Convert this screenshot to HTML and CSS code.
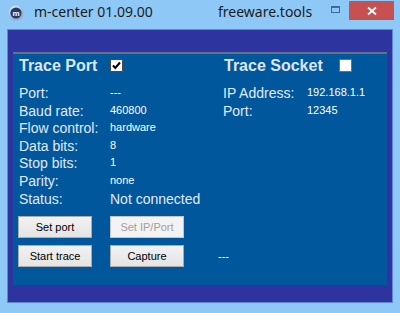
FILE: index.html
```html
<!DOCTYPE html>
<html lang="en">
<head>
    <meta charset="UTF-8">
    <title>m-center 01.09.00</title>
    <link rel="stylesheet" href="styles.css">
</head>
<body>
    <div class="titlebar">
        <svg class="app-icon" width="16" height="16" viewBox="0 0 16 16">
            <defs>
                <radialGradient id="ring" cx="40%" cy="30%" r="75%">
                    <stop offset="0" stop-color="#f4f6fa"/>
                    <stop offset="1" stop-color="#8d9bb2"/>
                </radialGradient>
            </defs>
            <circle cx="8" cy="8" r="7.6" fill="url(#ring)"/>
            <circle cx="8" cy="8" r="5.6" fill="#1c3c78"/>
            <text x="8" y="10.6" text-anchor="middle" font-family="Liberation Sans, sans-serif" font-weight="bold" font-size="8" fill="#ffffff">m</text>
        </svg>
        <span class="title">m-center 01.09.00</span>
        <span class="site">freeware.tools</span>
        <span class="max-btn"></span>
        <span class="close-btn">
            <svg width="10" height="10" viewBox="0 0 10 10">
                <path d="M1 1.5 L9 8.5 M9 1.5 L1 8.5" stroke="#ffffff" stroke-width="1.8"/>
            </svg>
        </span>
    </div>

    <div class="client">
        <div class="panel">
            <div class="columns">
                <!-- Trace Port -->
                <section class="col col-port">
                    <div class="col-head">
                        <span class="head-text">Trace Port</span>
                        <span class="check">
                            <svg width="11" height="11" viewBox="0 0 11 11">
                                <path d="M2 5.5 L4.3 8 L9 2.5" fill="none" stroke="#000000" stroke-width="2"/>
                            </svg>
                        </span>
                    </div>
                    <div class="row"><span class="label">Port:</span><span class="value">---</span></div>
                    <div class="row"><span class="label">Baud rate:</span><span class="value">460800</span></div>
                    <div class="row"><span class="label">Flow control:</span><span class="value">hardware</span></div>
                    <div class="row"><span class="label">Data bits:</span><span class="value">8</span></div>
                    <div class="row"><span class="label">Stop bits:</span><span class="value">1</span></div>
                    <div class="row"><span class="label">Parity:</span><span class="value">none</span></div>
                    <div class="row"><span class="label">Status:</span><span class="status">Not connected</span></div>
                </section>

                <!-- Trace Socket -->
                <section class="col col-socket">
                    <div class="col-head">
                        <span class="head-text">Trace Socket</span>
                        <span class="check unchecked"></span>
                    </div>
                    <div class="row"><span class="label">IP Address:</span><span class="value">192.168.1.1</span></div>
                    <div class="row"><span class="label">Port:</span><span class="value">12345</span></div>
                </section>
            </div>

            <div class="buttons">
                <div class="btn-row">
                    <button>Set port</button>
                    <button disabled>Set IP/Port</button>
                </div>
                <div class="btn-row">
                    <button>Start trace</button>
                    <button>Capture</button>
                    <span class="capture-state">---</span>
                </div>
            </div>
        </div>
    </div>
</body>
</html>
```

FILE: styles.css
```css
body {
    margin: 0;
    padding: 0;
    width: 400px;
    height: 313px;
    overflow: hidden;
    background: #8ec8f6;
    font-family: 'Liberation Sans', Arial, sans-serif;
}

.titlebar {
    display: flex;
    align-items: flex-start;
    height: 29px;
    line-height: 24px;
    font-family: 'Noto Sans', sans-serif;
    font-size: 14px;
    color: #1c1c1c;
}

.app-icon {
    margin: 5px 10px 0 8px;
}

.title {
    width: 184px;
}

.max-btn {
    width: 9px;
    height: 7px;
    margin: 6px 0 0 auto;
    border: 1px solid #3a6a98;
    border-top-width: 2px;
    box-sizing: border-box;
}

.close-btn {
    display: flex;
    align-items: center;
    justify-content: center;
    width: 45px;
    height: 19px;
    margin: 1px 6px 0 9px;
    background: #c75050;
}

.client {
    width: 386px;
    height: 274px;
    margin: 0 7px;
    box-sizing: border-box;
    border: 1px solid #5f86d8;
    background: #2d339f;
    padding: 22px 5px 17px 5px;
}

.panel {
    height: 100%;
    box-sizing: border-box;
    background: #01579b;
    border-top: 2px solid #6a6f88;
    padding: 3px 0 0 6px;
}

.columns {
    display: grid;
    grid-template-columns: 204px 1fr;
}

.col-head {
    display: flex;
    height: 18px;
    line-height: 18px;
    margin-bottom: 10px;
}

.head-text {
    font-size: 16px;
    font-weight: bold;
    color: #dde6f5;
}

.col-port .head-text {
    width: 91px;
}

.col-socket .head-text {
    width: 115px;
    margin-left: 1px;
}

.check {
    display: flex;
    align-items: center;
    justify-content: center;
    width: 13px;
    height: 13px;
    margin-top: 2px;
    box-sizing: border-box;
    background: #ffffff;
    border: 1px solid #4a4a4a;
}

.check.unchecked {
    border-color: #707070;
}

.row {
    display: flex;
    align-items: flex-start;
    height: 17.6px;
}

.label {
    font-size: 14px;
    line-height: 17.6px;
    color: #e2eaf7;
}

.col-port .label {
    width: 91px;
}

.col-socket .label {
    width: 84px;
}

.value {
    font-size: 11px;
    line-height: 14px;
    color: #ffffff;
}

.status {
    font-size: 14px;
    line-height: 17.6px;
    color: #e2eaf7;
}

.buttons {
    display: flex;
    flex-direction: column;
    gap: 7px;
    margin: 8px 0 0 -1px;
}

.btn-row {
    display: flex;
    align-items: center;
    gap: 18px;
}

button {
    width: 74px;
    height: 22px;
    padding: 0;
    border: 1px solid #acacac;
    background: linear-gradient(#f2f2f2, #e4e4e4);
    font-family: 'Liberation Sans', Arial, sans-serif;
    font-size: 11px;
    color: #000000;
}

button:disabled {
    border-color: #c4c4c4;
    background: #f3f3f3;
    color: #a0a0a0;
}

.capture-state {
    margin-left: 16px;
    font-size: 11px;
    color: #ffffff;
}
```
